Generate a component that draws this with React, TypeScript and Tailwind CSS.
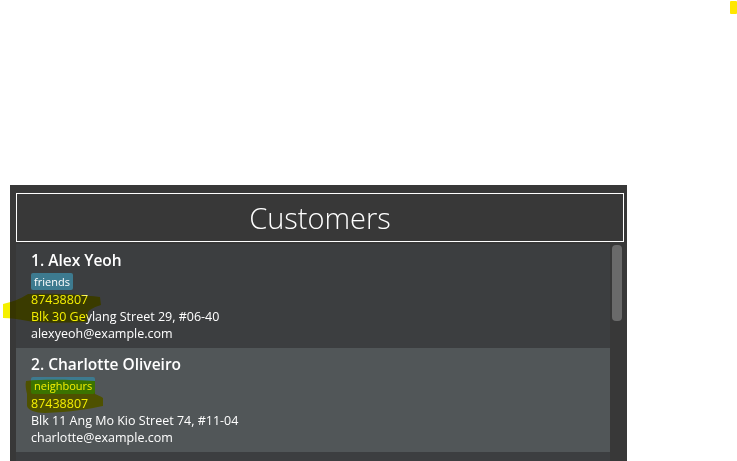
import React from "react";

interface Customer {
  name: string;
  tag: string;
  phone: string;
  address: string;
  email: string;
}

const customers: Customer[] = [
  {
    name: "Alex Yeoh",
    tag: "friends",
    phone: "87438807",
    address: "Blk 30 Geylang Street 29, #06-40",
    email: "alexyeoh@example.com",
  },
  {
    name: "Charlotte Oliveiro",
    tag: "neighbours",
    phone: "87438807",
    address: "Blk 11 Ang Mo Kio Street 74, #11-04",
    email: "charlotte@example.com",
  },
];

function CustomerCard({ c, index }: { c: Customer; index: number }) {
  const bg = index % 2 === 0 ? "bg-[#3c3e40]" : "bg-[#515658]";
  return (
    <div className={`${bg} h-[104px] pl-[15px] pt-[6px] text-white`}>
      <div className="text-[15.5px] leading-[21px] font-semibold">
        {index + 1}. {c.name}
      </div>
      <div className="mt-[2px] flex">
        <span className="rounded-[2px] bg-[#3d7a8f] px-[3px] text-[11px] leading-[17px]">
          {c.tag}
        </span>
      </div>
      <div className="pt-[1px] text-[12.5px] leading-[17px]">{c.phone}</div>
      <div className="text-[12.5px] leading-[17px]">{c.address}</div>
      <div className="text-[12.5px] leading-[17px]">{c.email}</div>
    </div>
  );
}

export default function App() {
  return (
    <div
      className="relative h-[461px] w-[737px] overflow-hidden bg-white"
      style={{ fontFamily: '"Open Sans", "Noto Sans", sans-serif' }}
    >
      <div className="pl-[10px] pt-[185px]">
        <div className="h-[276px] w-[617px] bg-[#383838] pl-[6px] pr-[3px] pt-[8px]">
          {/* HEADER */}
          <div className="flex h-[49px] items-center justify-center border border-white">
            <span className="text-[29px] font-light text-white">Customers</span>
          </div>

          {/* LIST */}
          <div className="mt-[2px] flex h-[220px] bg-[#3c3e40]">
            <div className="w-[594px]">
              {customers.map((c, i) => (
                <CustomerCard key={i} c={c} index={i} />
              ))}
            </div>
            <div className="flex flex-1 justify-center bg-[#383838] pt-[1px]">
              <div className="h-[76px] w-[10px] rounded-[4px] bg-[#6a6a6a]" />
            </div>
          </div>
        </div>
      </div>

      {/* highlighter marks */}
      <svg
        className="pointer-events-none absolute left-0 top-0 mix-blend-multiply"
        width="737"
        height="461"
        viewBox="0 0 737 461"
      >
        <rect x="730" y="1" width="7" height="13" rx="1" fill="#ffe600" />
        <path
          d="M3,304 C12,302 20,299 28,294 C50,293 80,294 100,297 L101,305 C95,307 90,309 88,312 L87,322 C60,323 40,323 28,321 C18,319 10,318 3,318 Z"
          fill="#f5f000"
        />
        <path
          d="M26,381 C45,379 75,380 95,381 L95,394 C97,395 101,396 103,398 L103,406 C90,409 70,412 45,413 C35,413 28,410 27,406 L27,394 C26,390 25,385 26,381 Z"
          fill="#f5f000"
        />
      </svg>
    </div>
  );
}
